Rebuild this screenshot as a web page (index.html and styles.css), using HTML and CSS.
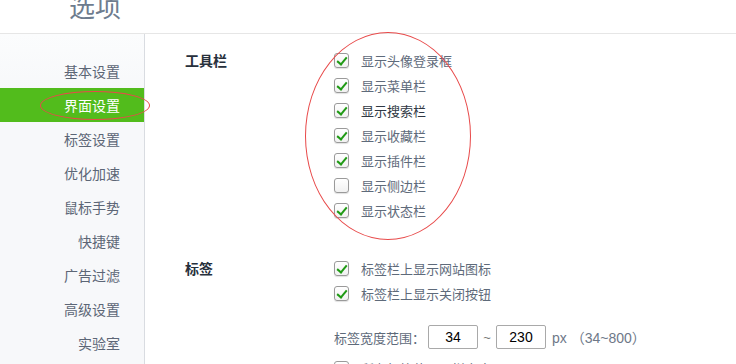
FILE: index.html
```html
<!DOCTYPE html>
<html lang="zh">
<head>
<meta charset="utf-8">
<link rel="stylesheet" href="styles.css">
</head>
<body>
<div class="page">
  <header class="header"><h1 class="title">选项</h1></header>
  <div class="main">
    <nav class="sidebar">
      <div class="nav-item">基本设置</div>
      <div class="nav-item active">界面设置</div>
      <div class="nav-item">标签设置</div>
      <div class="nav-item">优化加速</div>
      <div class="nav-item">鼠标手势</div>
      <div class="nav-item">快捷键</div>
      <div class="nav-item">广告过滤</div>
      <div class="nav-item">高级设置</div>
      <div class="nav-item">实验室</div>
    </nav>
    <section class="content">
      <div class="section">
        <div class="section-label">工具栏</div>
        <div class="options">
          <label class="opt"><span class="cb checked"></span>显示头像登录框</label>
          <label class="opt"><span class="cb checked"></span>显示菜单栏</label>
          <label class="opt dark"><span class="cb checked"></span>显示搜索栏</label>
          <label class="opt"><span class="cb checked"></span>显示收藏栏</label>
          <label class="opt"><span class="cb checked"></span>显示插件栏</label>
          <label class="opt"><span class="cb"></span>显示侧边栏</label>
          <label class="opt"><span class="cb checked"></span>显示状态栏</label>
        </div>
      </div>
      <div class="section second">
        <div class="section-label">标签</div>
        <div class="options">
          <label class="opt"><span class="cb checked"></span>标签栏上显示网站图标</label>
          <label class="opt"><span class="cb checked"></span>标签栏上显示关闭按钮</label>
          <div class="range">
            <span>标签宽度范围：</span>
            <span class="num">34</span>
            <span class="tilde">~</span>
            <span class="num">230</span>
            <span class="unit">px （34~800）</span>
          </div>
          <label class="opt"><span class="cb checked"></span>所有标签使用同样宽度</label>
        </div>
      </div>
    </section>
  </div>
  <div class="mark mark-nav"></div>
  <div class="mark mark-opts"></div>
</div>
</body>
</html>
```

FILE: styles.css
```css
* { box-sizing: border-box; }
html, body { margin: 0; padding: 0; background: #fff; }
body {
  font-family: "Noto Sans CJK SC", "Noto Sans", sans-serif;
  width: 736px; height: 364px; overflow: hidden;
}
.page { position: relative; width: 736px; height: 364px; }
.header {
  height: 34px;
  border-bottom: 1px solid #e6e6e6;
  overflow: hidden;
}
.title {
  margin: -14px 0 0 69px;
  font-size: 26px;
  font-weight: normal;
  line-height: 40px;
  color: #6e7c8e;
}
.main { display: flex; height: 330px; }
.sidebar {
  width: 145px;
  flex: none;
  background: linear-gradient(#fbfcfd, #f7f8fa 60px, #f7f8fa);
  border-right: 1px solid #d9dce1;
  padding-top: 20px;
}
.nav-item {
  height: 34px;
  line-height: 34px;
  text-align: right;
  padding-right: 24px;
  font-size: 14px;
  color: #5c6676;
}
.nav-item.active { background: #52bc1c; color: #fff; }
.content { flex: 1; padding: 14px 0 0 40px; }
.section { display: flex; }
.section.second { margin-top: 33px; }
.section-label {
  width: 149px;
  flex: none;
  font-size: 14px;
  font-weight: bold;
  color: #27303c;
  line-height: 25px;
}
.options { display: flex; flex-direction: column; }
.opt {
  display: flex;
  align-items: center;
  height: 25px;
  font-size: 13px;
  color: #5e6a7a;
}
.opt.dark { color: #2f3844; }
.cb {
  width: 15px; height: 15px;
  border: 1px solid #9a9a9a;
  border-radius: 3px;
  margin-right: 12px;
  background: linear-gradient(#fff, #f1f1f1);
  box-shadow: 0 1px 1px rgba(0,0,0,0.12);
  position: relative;
}
.cb.checked::after {
  content: "";
  position: absolute;
  left: 4px; top: 1px;
  width: 4px; height: 8px;
  border: solid #1f9a14;
  border-width: 0 2.5px 2.5px 0;
  transform: rotate(40deg);
}
.range {
  display: flex;
  align-items: center;
  height: 24px;
  margin: 19px 0 7px;
  font-size: 13px;
  color: #5e6a7a;
}
.num {
  width: 50px; height: 24px;
  border: 1px solid #a9a9a9;
  border-radius: 2px;
  text-align: center;
  line-height: 22px;
  font-family: "Liberation Sans", Arial, sans-serif;
  font-size: 14px;
  color: #000;
  margin-left: 3px;
}
.tilde { width: 18px; text-align: center; font-family: "Liberation Sans", sans-serif; color: #777; }
.num + .tilde + .num { margin-left: 0; }
.unit { margin-left: 6px; font-family: "Liberation Sans", "Noto Sans CJK SC", sans-serif; font-size: 14px; color: #6e7888; }
.mark {
  position: absolute;
  border: 1px solid #e84a4a;
  border-radius: 50%;
  pointer-events: none;
}
.mark-nav { left: 40px; top: 91px; width: 110px; height: 29px; }
.mark-opts { left: 305px; top: 32px; width: 166px; height: 208px; }
```
